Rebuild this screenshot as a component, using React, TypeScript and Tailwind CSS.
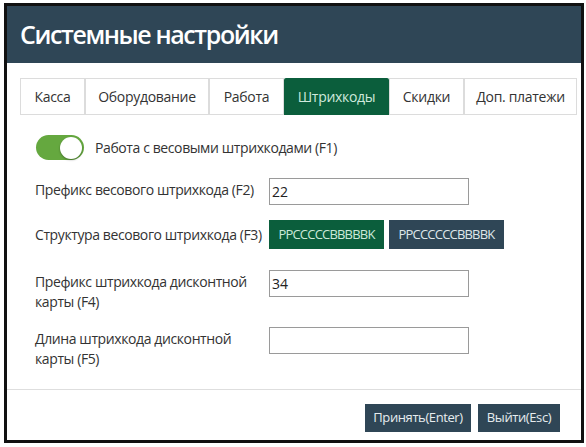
const tabs = ["Касса", "Оборудование", "Работа", "Штрихкоды", "Скидки", "Доп. платежи"];
const tabWidths = ["w-[65px]", "w-[124px]", "w-[75px]", "w-[105px]", "w-[75px]", "w-[113px]"];

function Field({ label, value, h = "h-[40px]" }: { label: React.ReactNode; value: string; h?: string }) {
  return (
    <div className={`flex ${h}`}>
      <div className="w-[234px] pt-[2px] text-[14px] leading-[20px] tracking-[-0.4px] text-[#333]">{label}</div>
      <div className="w-[200px] h-[27px] border border-[#9a9a9a] px-[2px] text-[14px] leading-[25px] text-[#222]">
        {value}
      </div>
    </div>
  );
}

export default function App() {
  return (
    <div className="w-[586px] h-[447px] bg-white pt-[3px] pl-[4px]" style={{ fontFamily: '"Open Sans", "Noto Sans", sans-serif' }}>
      <div className="w-[580px] h-[440px] border-[3px] border-[#111] flex flex-col">
        <div className="h-[57px] bg-[#2f4656] flex items-center px-[13px]">
          <h1 className="text-[25px] font-semibold text-white tracking-[-1.4px]">Системные настройки</h1>
        </div>

        <div className="flex mt-[15px] ml-[13px] h-[37px]">
          {tabs.map((t, i) => (
            <div
              key={t}
              className={`${tabWidths[i]} flex items-center justify-center text-[14px] tracking-[-0.3px] ${
                i === 3
                  ? "bg-[#0b5e3c] text-[#cfe9dc] rounded-t-[2px]"
                  : "border border-[#dcdcdc] text-[#333] bg-white"
              }`}
            >
              {t}
            </div>
          ))}
        </div>

        <div className="flex items-center mt-[20px] ml-[29px] h-[25px] gap-[11px]">
          <div className="w-[48px] h-[25px] rounded-full bg-[#65a83f] flex items-center justify-end pr-[2px]">
            <div className="w-[22px] h-[22px] rounded-full bg-white shadow-[0_1px_2px_rgba(0,0,0,0.35)]" />
          </div>
          <span className="text-[14px] tracking-[-0.4px] text-[#333]">Работа с весовыми штрихкодами (F1)</span>
        </div>

        <div className="ml-[28px] mt-[18px] flex flex-col">
          <Field label="Префикс весового штрихкода (F2)" value="22" h="h-[42px]" />
          <div className="flex h-[50px]">
            <div className="w-[234px] pt-[5px] text-[14px] leading-[20px] tracking-[-0.4px] text-[#333]">Структура весового штрихкода (F3)</div>
            <div className="flex gap-[5px]">
              <div className="w-[115px] h-[29px] bg-[#0b5e3c] text-[#cde9d9] text-[13px] flex items-center justify-center tracking-[-0.8px]">
                PPCCCCCBBBBBK
              </div>
              <div className="w-[115px] h-[29px] bg-[#2f4656] text-[#dfe6ea] text-[13px] flex items-center justify-center tracking-[-0.8px]">
                PPCCCCCCBBBBK
              </div>
            </div>
          </div>
          <Field
            label={
              <>
                Префикс штрихкода дисконтной
                <br />
                карты (F4)
              </>
            }
            value="34"
            h="h-[57px]"
          />
          <Field
            label={
              <>
                Длина штрихкода дисконтной
                <br />
                карты (F5)
              </>
            }
            value=""
            h="h-[54px]"
          />
        </div>

        <div className="border-t border-[#dedede] mt-[8px]" />

        <div className="flex justify-end gap-[7px] pr-[21px] mt-[14px]">
          <button className="w-[106px] h-[28px] bg-[#2f4656] text-[#e6ecef] text-[13px] tracking-[-0.4px]">Принять(Enter)</button>
          <button className="w-[82px] h-[28px] bg-[#2f4656] text-[#e6ecef] text-[13px] tracking-[-0.4px]">Выйти(Esc)</button>
        </div>
      </div>
    </div>
  );
}
